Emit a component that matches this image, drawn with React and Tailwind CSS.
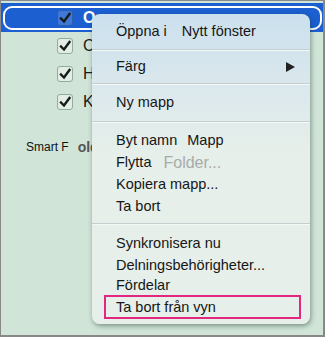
import React from 'react';

const font = { fontFamily: '"Liberation Sans", Arial, sans-serif' };

function Check({ selected }) {
  return (
    <div
      className={`w-[16px] h-[16px] rounded-[3px] border flex items-center justify-center ${
        selected ? 'bg-[#3f78d6] border-[#2c5cae]' : 'bg-[#e2ede5] border-[#93ab9b]'
      }`}
    >
      <svg width="14" height="14" viewBox="0 0 14 14">
        <path d="M3 7.5 L6 10.5 L11.5 3" fill="none" stroke="#151c18" strokeWidth="2.4" strokeLinecap="square" />
      </svg>
    </div>
  );
}

const Sep = () => (
  <div className="flex flex-col">
    <div className="h-px bg-[#c3cfcf]" />
    <div className="h-px bg-[#f4f8f6]" />
  </div>
);

export default function App() {
  const rows = ['C', 'H', 'K'];
  return (
    <div
      className="relative w-[325px] h-[337px] overflow-hidden bg-[#d0e4d8] border-l border-t border-r-2 border-b-2 border-[#888]"
      style={font}
    >
      {/* folder list */}
      <div className="pt-[2px]">
        <div className="h-[29px] bg-[#1b5fd0] pl-[2px] pr-[1px] pt-[3px] pb-[2px]">
          <div className="h-full rounded-[9px] border-2 border-white flex items-center pl-[52px]">
            <Check selected />
            <span className="ml-[10px] text-[16px] font-bold text-white">O</span>
          </div>
        </div>
        {rows.map((r) => (
          <div key={r} className="h-[28px] flex items-center pl-[56px]">
            <Check />
            <span className="ml-[10px] text-[16px] text-[#1a1a1a]">{r}</span>
          </div>
        ))}
        <div className="mt-[21px] flex items-center pl-[25px] h-[20px]">
          <span className="text-[12px] text-[#111]">Smart F</span>
          <span className="ml-[9px] text-[14px] font-bold text-[#555]">olders</span>
        </div>
      </div>

      {/* context menu */}
      <div className="absolute left-[91px] top-[13px] w-[218px] rounded-[8px] bg-linear-to-b from-[#cbe0ee] via-[#dfeaec] via-30% to-[#e6efe9] to-45% shadow-[1px_2px_5px_rgba(20,50,30,0.45)] text-[14.5px] text-[#161616] flex flex-col">
        <div className="h-[35px] flex items-center pl-[24px]">
          <span>Öppna i</span>
          <span className="ml-[15px]">Nytt fönster</span>
        </div>
        <Sep />
        <div className="h-[32px] flex items-center justify-between pl-[24px] pr-[15px]">
          <span>Färg</span>
          <svg width="9" height="10" viewBox="0 0 9 10">
            <polygon points="0,0 9,5 0,10" fill="#222" />
          </svg>
        </div>
        <Sep />
        <div className="h-[36px] flex items-center pl-[24px]">Ny mapp</div>
        <Sep />
        <div className="pt-[7px] pb-[5px] flex flex-col">
          <div className="h-[22px] flex items-center pl-[24px]">
            <span>Byt namn</span>
            <span className="ml-[10px]">Mapp</span>
          </div>
          <div className="h-[22px] flex items-center pl-[24px]">
            <span>Flytta</span>
            <span className="ml-[12px] text-[16px] text-[#a9aba9]">Folder...</span>
          </div>
          <div className="h-[22px] flex items-center pl-[24px]">Kopiera mapp...</div>
          <div className="h-[22px] flex items-center pl-[24px]">Ta bort</div>
        </div>
        <Sep />
        <div className="pt-[8px] pb-[5px] flex flex-col">
          <div className="h-[22px] flex items-center pl-[24px]">Synkronisera nu</div>
          <div className="h-[21px] flex items-center pl-[24px]">Delningsbehörigheter...</div>
          <div className="h-[20px] flex items-center pl-[24px]">Fördelar</div>
          <div className="mt-[-1px] ml-[12px] mr-[9px] h-[24px] border-2 border-[#e2277f] flex items-center pl-[10px] pt-[2px]">
            Ta bort från vyn
          </div>
        </div>
      </div>
    </div>
  );
}
